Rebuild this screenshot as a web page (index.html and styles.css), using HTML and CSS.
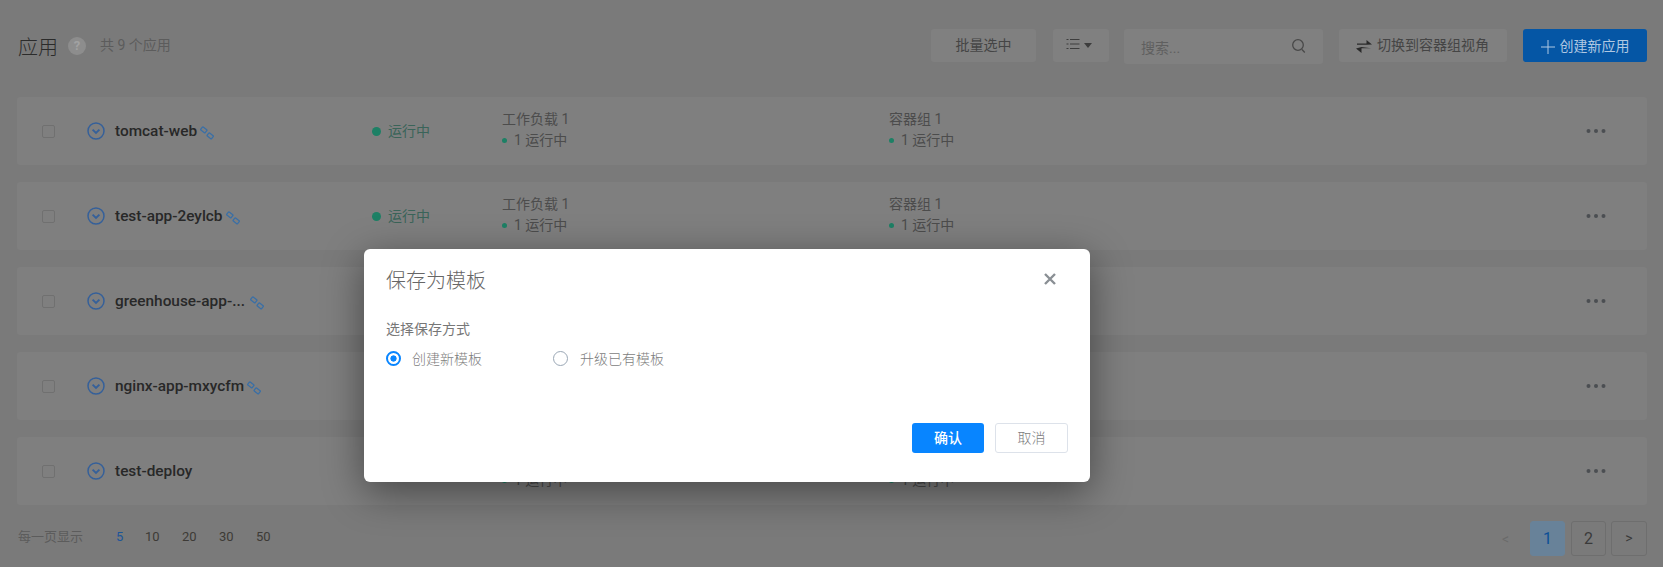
FILE: index.html
```html
<!DOCTYPE html>
<html lang="zh">
<head>
<meta charset="utf-8">
<title>应用</title>
<link rel="stylesheet" href="styles.css">
</head>
<body>
<svg class="defs" width="0" height="0">
  <defs>
    <symbol id="chev" viewBox="0 0 18 18"><circle cx="9" cy="9" r="8" fill="none" stroke="currentColor" stroke-width="1.500"/><path d="M5.600 7.600 9 11l3.400-3.400" fill="none" stroke="currentColor" stroke-width="1.900"/></symbol>
    <symbol id="link" viewBox="0 0 14 14"><g fill="none" stroke="currentColor" stroke-width="1.300"><rect x="1" y="2" width="5.600" height="3.800" rx=".6" transform="rotate(38 3.800 3.900)"/><rect x="7.400" y="8" width="5.600" height="3.800" rx=".6" transform="rotate(38 10.200 9.900)"/></g></symbol>
    <symbol id="dots" viewBox="0 0 20 4"><circle cx="2.500" cy="2" r="2"/><circle cx="10" cy="2" r="2"/><circle cx="17.500" cy="2" r="2"/></symbol>
  </defs>
</svg>
<main class="page">
  <header class="top">
    <h1 class="title">应用</h1>
    <span class="help">?</span>
    <span class="count">共 9 个应用</span>
    <div class="tools">
      <button class="tool batch">批量选中</button>
      <button class="tool list">
        <svg width="14" height="12" viewBox="0 0 14 12"><path d="M4 1.500h9.500M4 6h9.500M4 10.500h9.500M.5 1.500h2M.5 6h2M.5 10.500h2" stroke="#3d3d3d" stroke-width="1" fill="none"/></svg>
        <i class="caret"></i>
      </button>
      <div class="search"><span>搜索...</span>
        <svg width="16" height="17" viewBox="0 0 16 17"><circle cx="7" cy="7" r="5.300" fill="none" stroke="#484848" stroke-width="1.300"/><path d="M11 11.500l2.800 3" stroke="#484848" stroke-width="1.300"/></svg>
      </div>
      <button class="tool swap">
        <svg width="16" height="13" viewBox="0 0 16 13"><path d="M1 3.500h9.500V0L16 4.500l-5.500.2V4.800H1zM15 8.200H5.500V13L0 8.500l5.500-1.500z" fill="#2a2a2a"/></svg>
        切换到容器组视角
      </button>
      <button class="create"><svg width="14" height="14" viewBox="0 0 14 14"><path d="M7 0v14M0 7h14" stroke="#b0c8e2" stroke-width="1"/></svg>创建新应用</button>
    </div>
  </header>

  <section class="rows">
    <article class="row">
      <i class="check"></i><svg class="chev"><use href="#chev"/></svg>
      <div class="name"><b>tomcat-web</b><svg class="link"><use href="#link"/></svg></div>
      <div class="status"><i></i>运行中</div>
      <div class="col"><p>工作负载 1</p><p><i></i>1 运行中</p></div>
      <div class="col"><p>容器组 1</p><p><i></i>1 运行中</p></div>
      <svg class="more"><use href="#dots"/></svg>
    </article>
    <article class="row">
      <i class="check"></i><svg class="chev"><use href="#chev"/></svg>
      <div class="name"><b>test-app-2eylcb</b><svg class="link"><use href="#link"/></svg></div>
      <div class="status"><i></i>运行中</div>
      <div class="col"><p>工作负载 1</p><p><i></i>1 运行中</p></div>
      <div class="col"><p>容器组 1</p><p><i></i>1 运行中</p></div>
      <svg class="more"><use href="#dots"/></svg>
    </article>
    <article class="row">
      <i class="check"></i><svg class="chev"><use href="#chev"/></svg>
      <div class="name"><b class="trunc">greenhouse-app-...</b><svg class="link"><use href="#link"/></svg></div>
      <div class="status"><i></i>运行中</div>
      <div class="col"><p>工作负载 1</p><p><i></i>1 运行中</p></div>
      <div class="col"><p>容器组 1</p><p><i></i>1 运行中</p></div>
      <svg class="more"><use href="#dots"/></svg>
    </article>
    <article class="row">
      <i class="check"></i><svg class="chev"><use href="#chev"/></svg>
      <div class="name"><b>nginx-app-mxycfm</b><svg class="link"><use href="#link"/></svg></div>
      <div class="status"><i></i>运行中</div>
      <div class="col"><p>工作负载 1</p><p><i></i>1 运行中</p></div>
      <div class="col"><p>容器组 1</p><p><i></i>1 运行中</p></div>
      <svg class="more"><use href="#dots"/></svg>
    </article>
    <article class="row">
      <i class="check"></i><svg class="chev"><use href="#chev"/></svg>
      <div class="name"><b>test-deploy</b></div>
      <div class="status"><i></i>运行中</div>
      <div class="col"><p>工作负载 1</p><p><i></i>1 运行中</p></div>
      <div class="col"><p>容器组 1</p><p><i></i>1 运行中</p></div>
      <svg class="more"><use href="#dots"/></svg>
    </article>
  </section>

  <footer class="foot">
    <span class="per">每一页显示</span>
    <span class="sizes"><a class="on">5</a><a>10</a><a>20</a><a>30</a><a>50</a></span>
    <nav class="pager">
      <span class="prev">&lt;</span>
      <a class="cur">1</a><a>2</a><a class="next">&gt;</a>
    </nav>
  </footer>
</main>

<div class="modal">
  <div class="m-head"><h2>保存为模板</h2>
    <svg width="12" height="12" viewBox="0 0 12 12"><path d="M1 1l10 10M11 1 1 11" stroke="#8a8f94" stroke-width="2.400"/></svg>
  </div>
  <p class="m-label">选择保存方式</p>
  <div class="radios">
    <label class="radio sel"><i></i>创建新模板</label>
    <label class="radio"><i></i>升级已有模板</label>
  </div>
  <div class="m-foot">
    <button class="ok">确认</button>
    <button class="cancel">取消</button>
  </div>
</div>
</body>
</html>
```

FILE: styles.css
```css
* { box-sizing: border-box; }
html, body { margin: 0; height: 567px; overflow: hidden; }
body {
  background: #7a7a7a;
  font-family: Roboto, "Noto Sans CJK SC", sans-serif;
  font-size: 14px;
  color: #4a4a4a;
  position: relative;
}
.defs { position: absolute; }
h1, h2, p { margin: 0; font-weight: 400; }
button { font: inherit; border: 0; padding: 0; }
i { display: block; }
a { display: block; }

.page { padding: 29px 16px 0 17px; }
.top { display: flex; align-items: flex-start; height: 35px; }
.title { font-size: 20px; line-height: 33px; margin: 3px 0 0 1px; color: #2b2b2b; font-weight: 300; }
.help {
  width: 18px; height: 18px; margin: 8px 0 0 10px; border-radius: 50%;
  background: #8d8d8d; color: #a2a2a2; font: 700 13px/18px Roboto, sans-serif; text-align: center;
}
.count { margin-left: 14px; line-height: 33px; color: #5c5c5c; }
.tools { margin-left: auto; display: flex; align-items: flex-start; gap: 16px; }
.tool {
  height: 33px; background: #808080; border-radius: 3px; color: #454545; padding-bottom: 3px;
  display: flex; align-items: center; justify-content: center;
}
.batch { width: 105px; }
.list { width: 56px; gap: 4px; margin-left: 1px; padding-right: 4px; }
.caret { border: 4px solid transparent; border-top: 5px solid #3d3d3d; border-bottom: 0; margin-top: 2px; }
.search {
  width: 199px; height: 35px; margin-left: -1px; background: #808080; border-radius: 3px;
  display: flex; align-items: center; justify-content: space-between; padding: 0 16px 0 17px;
  color: #5f5f5f;
}
.swap { width: 168px; gap: 5px; padding-right: 1px; }
.swap svg { margin-top: 4px; }
.create {
  width: 124px; height: 33px; background: #0556a5; border-radius: 3px; color: #b0c8e2; padding-bottom: 2px;
  display: flex; align-items: center; justify-content: center; gap: 5px;
}
.create svg { margin-top: 4px; }

.rows { margin-top: 33px; display: flex; flex-direction: column; gap: 17px; }
.row {
  height: 68px; background: #7f7f7f; border-radius: 3px; display: flex; align-items: center;
  padding-left: 26px; position: relative;
}
.check { width: 13px; height: 13px; border: 1px solid #707070; border-radius: 2px; background: #7f7f7f; flex: none; margin-left: -1px; }
.chev { width: 18px; height: 18px; margin-left: 32px; color: #35609a; flex: none; }
.name { width: 257px; margin-left: 10px; display: flex; align-items: center; flex: none; }
.name b { font-weight: 500; font-size: 15.400px; color: #282828; }
.name b.trunc { margin-right: 2px; }
.link { width: 14px; height: 14px; margin-left: 3px; color: #3a6fa6; margin-top: 3px; }
.status { width: 130px; color: #3a6459; display: flex; align-items: center; gap: 7px; flex: none; padding-bottom: 2px; }
.status i { width: 9px; height: 9px; border-radius: 50%; background: #1d8065; margin-top: 2px; }
.col { width: 387px; line-height: 21px; color: #4c4c4c; flex: none; margin-top: -2px; }
.col p { display: flex; align-items: center; }
.col i { width: 5px; height: 5px; border-radius: 50%; background: #1d8065; margin-right: 7px; }
.more { width: 20px; height: 4px; fill: #4b4e52; position: absolute; right: 41px; top: 32px; }

.foot { display: flex; align-items: flex-start; margin-top: 16px; height: 35px; }
.per { font-size: 13px; line-height: 32px; color: #5c5c5c; margin-left: 1px; }
.sizes { display: flex; margin-left: 33px; line-height: 32px; font-size: 13px; color: #3d3a36; }
.sizes a { width: 37px; }
.sizes a.on { width: 29px; color: #1c5599; }
.pager { margin-left: auto; display: flex; align-items: center; gap: 6px; }
.pager a {
  width: 35px; height: 35px; border: 1px solid #6e6e6e; border-radius: 3px;
  text-align: center; line-height: 33px; font-size: 16px; color: #3a3a3a;
}
.pager .cur { background: #688299; border-color: #688299; color: #0c4f96; }
.pager .next { width: 36px; font-size: 14px; margin-left: -1px; }
.prev { color: #6a6a6a; margin-right: 15px; font-size: 14px; }

.modal {
  position: absolute; left: 364px; top: 249px; width: 726px; height: 233px;
  background: #fff; border-radius: 6px; padding: 0 22px;
  box-shadow: 0 10px 40px rgba(0, 0, 0, .45);
  font-weight: 300; color: #555;
}
.m-head { display: flex; justify-content: space-between; align-items: center; height: 60px; padding-right: 12px; }
.m-head h2 { font-size: 20px; font-weight: 300; color: #666; }
.m-label { margin-top: 10px; line-height: 20px; color: #777; }
.radios { display: flex; margin-top: 9px; height: 20px; }
.radio { display: flex; align-items: center; gap: 11px; width: 167px; color: #7d7d7d; }
.radio + .radio { gap: 12px; }
.radio i { width: 15px; height: 15px; border: 1px solid #9aa7b5; border-radius: 50%; background: #fff; }
.radio.sel i { border: 2px solid #0885ff; background: radial-gradient(circle, #0885ff 0 2.800px, #fff 3.400px); }
.m-foot { position: absolute; right: 22px; top: 174px; display: flex; gap: 11px; }
.ok { width: 72px; height: 30px; background: #0885ff; color: #fff; border-radius: 3px; font-weight: 500; padding-bottom: 2px; }
.cancel { width: 73px; height: 30px; background: #fff; color: #7d7d7d; border: 1px solid #dde2ea; border-radius: 3px; padding-bottom: 2px; }
```
